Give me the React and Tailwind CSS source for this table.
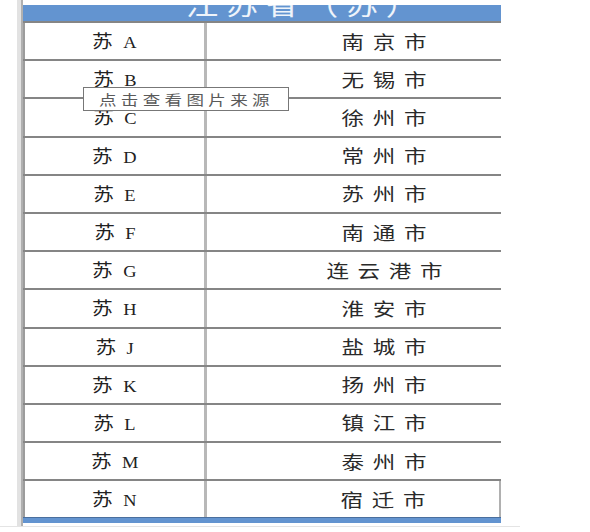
const ROWS = [
  ['A', '南京市'],
  ['B', '无锡市'],
  ['C', '徐州市'],
  ['D', '常州市'],
  ['E', '苏州市'],
  ['F', '南通市'],
  ['G', '连云港市'],
  ['H', '淮安市'],
  ['J', '盐城市'],
  ['K', '扬州市'],
  ['L', '镇江市'],
  ['M', '泰州市'],
  ['N', '宿迁市'],
]

const serif = { fontFamily: '"Liberation Serif", "Noto Sans CJK SC", serif' }
const sans = { fontFamily: '"Noto Sans CJK SC", "Liberation Sans", sans-serif' }

export default function App() {
  return (
    <div className="relative w-[590px] h-[532px] overflow-hidden bg-white">
      <div className="flex pl-[17px]">
        <div className="w-[6px] h-[526px] bg-[#e2e2e2] border-r-2 border-[#b0b0b0]" />

        <div className="w-[478px] pt-[5px]">
          {/* header, title mostly scrolled off */}
          <div className="h-[16px] bg-[#6394d0] overflow-hidden flex justify-center">
            <span
              className="inline-block text-white/90 text-[26px] leading-none mt-[-14px] pl-[70px] tracking-[6px] scale-x-125"
              style={sans}
            >
              江苏省（苏）
            </span>
          </div>

          {ROWS.map(([letter, city], i) => (
            <div key={letter} className="flex h-[38.2px] border-t-2 border-[#858585]">
              <div className="w-[184px] flex items-center justify-center border-l-2 border-l-[#9c9c9c] border-r-[3px] border-r-[#b8b8b8]">
                <span className="inline-flex items-baseline text-[#222] scale-x-[1.15]">
                  <span className="text-[18px]" style={sans}>苏</span>
                  <span className="text-[16px] ml-[9px]" style={serif}>{letter}</span>
                </span>
              </div>
              <div
                className={
                  'flex-1 flex items-center justify-center pl-[60px] ' +
                  (i === ROWS.length - 1 ? 'border-r-2 border-r-[#b0b0b0]' : '')
                }
              >
                <span
                  className="inline-block text-[18px] text-[#2a2a2a] tracking-[7px] pl-[7px] scale-x-125"
                  style={sans}
                >
                  {city}
                </span>
              </div>
            </div>
          ))}

          <div className="h-[6px] bg-[#6394d0] border-t border-[#4a6f9e]" />
        </div>
      </div>
      <div className="h-px w-[520px] bg-[#e4e4e4]" />

      <div className="absolute left-[83px] top-[87px] w-[206px] h-[24px] bg-white border border-[#777] flex items-center pl-[15px]">
        <span
          className="inline-block origin-left text-[14px] leading-none text-[#5a5a5a] tracking-[3.5px] scale-x-125"
          style={sans}
        >
          点击查看图片来源
        </span>
      </div>
    </div>
  )
}
